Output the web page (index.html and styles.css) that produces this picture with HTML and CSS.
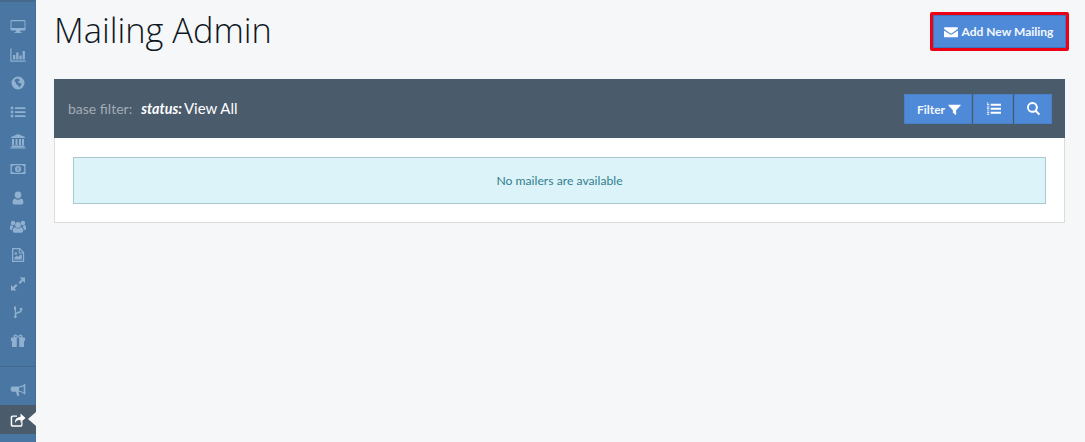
FILE: index.html
```html
<!DOCTYPE html>
<html lang="en">
<head>
<meta charset="utf-8">
<title>Mailing Admin</title>
<link rel="stylesheet" href="styles.css">
</head>
<body>
<div class="app">
  <nav class="sidebar">
    <ul class="nav-main">
      <li><svg viewBox="0 0 16 16"><path d="M1.500 2h13a1 1 0 0 1 1 1v8.500a1 1 0 0 1-1 1H10l.4 1.500h1.100v1h-7v-1h1.100L6 12.500H1.500a1 1 0 0 1-1-1V3a1 1 0 0 1 1-1zm0 1.200v6.800h13V3.200z" fill-rule="evenodd"/></svg></li>
      <li><svg viewBox="0 0 16 16"><path d="M.3 1.500h1.200v12h14.200v1.200H.3zM3 8h2.300v4.500H3zM6.200 5.500h2.300v7H6.200zM9.400 8.500h2.300v4H9.400zM12.600 4h2.300v8.500h-2.300z"/></svg></li>
      <li><svg viewBox="0 0 16 16"><path d="M8 1.500a6.500 6.500 0 1 0 0 13 6.500 6.500 0 0 0 0-13zM5 4.500l2-1 2 .5 1 1.500-1.500.5-.5 1.500 2 .5 1.500 1-1 2-1.500 1.500-.5-2-2-1-.5-2-1.500-1z" fill-rule="evenodd"/></svg></li>
      <li><svg viewBox="0 0 16 16"><path d="M.8 2.800h2.500v2.500H.8zM5 3.200h10.500v1.800H5zM.8 6.800h2.500v2.500H.8zM5 7.200h10.500V9H5zM.8 10.800h2.500v2.500H.8zM5 11.200h10.500V13H5z"/></svg></li>
      <li><svg viewBox="0 0 16 16"><path d="M8 1l7 3v1H1V4zM2 6h2v6H2zM5.500 6h2v6h-2zM9 6h2v6H9zM12 6h2v6h-2zM1.500 12.500h13V14h-13zM.5 14.300h15V15.500H.5z"/></svg></li>
      <li><svg viewBox="0 0 16 16"><path d="M.5 3h15v10H.5zM1.800 5.200v5.600a2 2 0 0 1 1.700 1h9a2 2 0 0 1 1.700-1V5.200a2 2 0 0 1-1.700-1h-9a2 2 0 0 1-1.700 1zM8 5a3 3 0 1 1 0 6 3 3 0 0 1 0-6zM7.400 6.500v3h1.200v-3z" fill-rule="evenodd"/></svg></li>
      <li><svg viewBox="0 0 16 16"><path d="M8 1.500a3.300 3.300 0 0 1 3.300 3.500A3.300 3.300 0 0 1 8 8.600 3.300 3.300 0 0 1 4.700 5 3.300 3.300 0 0 1 8 1.500zM5 8.400a4.300 4.300 0 0 0 6 0c1.600.3 2.400 1.700 2.400 3.800 0 1.400-.9 2.300-2.200 2.300H4.800c-1.300 0-2.200-.9-2.200-2.300 0-2.100.8-3.500 2.400-3.800z"/></svg></li>
      <li><svg viewBox="0 0 16 16"><path d="M3 1.800a2.200 2.200 0 1 1 0 4.400 2.200 2.200 0 0 1 0-4.400zM13 1.800a2.200 2.200 0 1 1 0 4.400 2.200 2.200 0 0 1 0-4.400zM8 3a2.900 2.900 0 1 1 0 5.800A2.900 2.900 0 0 1 8 3zM0 7.300c0-.6 1-1 2-1 .4.700 1 1.100 1.600 1.300-.9.800-1.500 1.900-1.500 3.300H1c-.6 0-1-.6-1-1.200zM16 7.300v2.400c0 .6-.4 1.200-1 1.200h-1.100c0-1.400-.6-2.500-1.500-3.300.6-.2 1.200-.6 1.600-1.300 1 0 2 .4 2 1zM4.800 8.200a4.400 4.400 0 0 0 6.400 0c1.400.3 2 1.700 2 3.400 0 1.400-.7 2.200-1.900 2.200H4.700c-1.200 0-1.900-.8-1.900-2.200 0-1.700.6-3.100 2-3.400z"/></svg></li>
      <li><svg viewBox="0 0 16 16"><path d="M2 1h8l4.200 4.200V15H2zM3.300 2.300v11.400h9.600V6.500H8.700V2.300zM9.800 2.600v2.800h2.800zM4.400 12.500v-1.800l2.200-2.200 1.400 1.400 2.700-2.700 1.100 1.100v4.200zM5.800 5.200a1.300 1.300 0 1 1 0 2.600 1.300 1.300 0 0 1 0-2.600z" fill-rule="evenodd"/></svg></li>
      <li><svg viewBox="0 0 16 16"><path d="M9.500 1.500H15V7l-2-2-3 3-1.500-1.500 3-3zM6.500 14.500H1V9l2 2 3-3 1.500 1.500-3 3z"/></svg></li>
      <li><svg viewBox="0 0 16 16"><path d="M4.800 1.500h1.200v6.500c.6-.9 1.500-1.200 2.700-1.400 1.100-.2 1.600-.6 1.700-1.300a1.400 1.400 0 0 1-.7-1.300 1.400 1.400 0 1 1 2.100 1.300c-.1 1.700-1.200 2.700-3 3-1.500.2-2.500.6-2.800 2a1.400 1.400 0 1 1-1.200 0zM4 1.500h2V5H4z"/></svg></li>
      <li><svg viewBox="0 0 16 16"><path d="M5.500 1.500c1 0 2 .9 2.500 2.200.5-1.300 1.500-2.200 2.500-2.200 1.200 0 2 .8 2 1.800 0 .5-.2 1-.5 1.200H15v3.500h-1V14H9.200V4.500H6.800V14H2V8H1V4.500h3c-.3-.2-.5-.7-.5-1.200 0-1 .8-1.800 2-1.800zM5.500 2.800a.6.6 0 0 0 0 1.200h1.400c-.3-.8-.9-1.200-1.400-1.200zM10.500 2.800c-.5 0-1.100.4-1.400 1.200h1.400a.6.6 0 0 0 0-1.200z" fill-rule="evenodd"/></svg></li>
    </ul>
    <ul class="nav-foot">
      <li><svg viewBox="0 0 16 16"><path d="M14.500 2h.8v10.500h-.8c-1.500-1.500-3.500-2.500-6-2.700l.8 3.700-2 .8-1.300-4.500H2.500A1.800 1.800 0 0 1 .7 8V6.200a1.800 1.800 0 0 1 1.800-1.800h5.500c2.700 0 5-1 6.500-2.400zM13.700 4.200A12 12 0 0 1 9 5.600v3.100c1.800.2 3.400.8 4.700 1.700z" fill-rule="evenodd"/></svg></li>
      <li class="active"><svg viewBox="0 0 16 16"><path d="M10.500 1.500L15.500 6l-5 4.500V8C8 8 6 8.400 5 11c-.3-3.700 2-6 5.500-6zM2.500 3.500H7v1.300H3a.8.8 0 0 0-.8.8v6.800c0 .4.4.8.8.8h7.500c.4 0 .8-.4.8-.8V10l1.200-1v4c0 1-.8 1.800-1.800 1.800H2.500A1.800 1.800 0 0 1 .7 13V5.300c0-1 .8-1.800 1.800-1.800z"/></svg></li>
    </ul>
  </nav>
  <main class="content">
    <header class="page-head">
      <h1 class="page-title">Mailing Admin</h1>
      <a class="add-btn" href="#"><svg class="ico" viewBox="0 0 16 16"><path d="M1 2.500h14c.5 0 1 .4 1 1 0 .6-.4 1.200-1 1.600L9 9.300a1.800 1.800 0 0 1-2 0L1 5.100C.4 4.700 0 4.100 0 3.500c0-.6.500-1 1-1zM0 6.300l6.500 4.300a2.700 2.700 0 0 0 3 0L16 6.300v6.700c0 .6-.4 1-1 1H1c-.6 0-1-.4-1-1z"/></svg>Add New Mailing</a>
    </header>
    <section class="panel">
      <div class="panel-bar">
        <div class="filter-text"><span class="filter-label">base filter:</span><em class="filter-key">status:</em><span class="filter-value">View All</span></div>
        <div class="btn-group">
          <button class="btn btn-filter">Filter<svg class="ico" viewBox="0 0 16 16"><path d="M.5 2h15v1L10 8.800V15l-4-3V8.800L.5 3z"/></svg></button>
          <button class="btn btn-list"><svg class="ico-list" viewBox="0 0 16 16"><path d="M1 1.500h1.500v1.200H1zM1 3.500h2.500v1H1zM1 5.800h2.500v1H1zM1 7.800h2.500v1H1zM1 10h2.500v1H1zM1 12h2.500v1H1zM1 14h2.500v1H1zM5 3h11v2H5zM5 7.200h11v2H5zM5 11.500h11v2H5z"/></svg></button>
          <button class="btn btn-search"><svg class="ico-search" viewBox="0 0 16 16"><path d="M6.800 1a5.800 5.800 0 0 1 4.700 9.200l3.600 3.600-1.500 1.500-3.600-3.600A5.800 5.800 0 1 1 6.800 1zm0 2.100a3.700 3.700 0 1 0 0 7.400 3.700 3.700 0 0 0 0-7.400z" fill-rule="evenodd"/></svg></button>
        </div>
      </div>
      <div class="panel-body">
        <div class="notice">No mailers are available</div>
      </div>
    </section>
  </main>
</div>
</body>
</html>
```
FILE: styles.css
```css
* { box-sizing: border-box; }
html, body { margin: 0; height: 100%; }
body {
  background: #f6f7f9;
  font-family: "Lato", "Open Sans", sans-serif;
  overflow: hidden;
}
.app { display: flex; height: 442px; }
.sidebar {
  width: 36px;
  flex: none;
  background: #4a76a3;
  border-top: 2px solid #47698c;
  border-right: 1px solid #44709c;
  padding-top: 9.500px;
}
.sidebar ul { list-style: none; margin: 0; padding: 0; }
.sidebar li {
  height: 28.7px;
  display: flex;
  align-items: center;
  justify-content: center;
}
.sidebar svg { width: 16px; height: 16px; fill: #8fb0cf; }
.nav-main { border-bottom: 1px solid #44698f; height: 355.500px; }
.nav-foot { padding-top: 8px !important; }
.nav-foot li { height: 29px; }
.nav-foot li:first-child { height: 30px; }
.nav-foot .active {
  background: #4a5b6c;
  position: relative;
  width: 36px;
}
.nav-foot .active svg { fill: #fff; }
.nav-foot .active::after {
  content: "";
  position: absolute;
  right: 0;
  top: 7px;
  border: 7px solid transparent;
  border-left: 0;
  border-right: 8px solid #f6f7f9;
}
.content { flex: none; width: 1011px; margin-left: 18px; }
.page-head {
  display: flex;
  justify-content: space-between;
  align-items: flex-start;
  height: 79px;
}
.page-title {
  margin: 8px 0 0;
  font-family: "Open Sans", sans-serif;
  font-size: 34.400px;
  line-height: 44px;
  font-weight: 300;
  color: #10181f;
}
.add-btn {
  display: flex;
  align-items: center;
  justify-content: center;
  width: 139px;
  height: 39px;
  margin: 12px -4px 0 0;
  padding: 0 2px 0 0;
  background: #4f8ad9;
  border: 3px solid #ed0016;
  border-radius: 2px;
  box-shadow: inset 0 0 0 1px #3f75bd;
  color: #f4f8fd;
  font-size: 12px;
  font-weight: 700;
  text-decoration: none;
}
.ico { width: 13px; height: 13px; fill: #fff; flex: none; }
.add-btn .ico { width: 14px; height: 14px; margin-right: 4px; }
.panel-bar {
  height: 59px;
  background: #4a5b6c;
  display: flex;
  align-items: center;
  justify-content: space-between;
  padding: 0 13px 0 14px;
}
.filter-text { display: flex; align-items: baseline; margin-top: -2px; }
.filter-label { font-size: 14px; color: #a3abb4; margin-right: 9px; }
.filter-key { font-size: 14.300px; font-weight: 700; color: #fff; margin-right: 2px; }
.filter-value { font-size: 15px; color: #fff; }
.btn-group { display: flex; gap: 1px; }
.btn {
  height: 30px;
  border: 1px solid #4a80c6;
  background: #4f8ad9;
  color: #f4f8fd;
  font: 700 12px "Lato", sans-serif;
  display: flex;
  align-items: center;
  justify-content: center;
  padding: 1px 0 0;
}
.btn-filter { width: 68px; gap: 3px; padding-left: 2px; }
.btn-list { width: 40px; padding-top: 0; }
.btn-search { width: 38px; padding-top: 0; }
.ico-list { width: 15px; height: 15px; fill: #fff; }
.ico-search { width: 15px; height: 15px; fill: #fff; }
.panel-body {
  height: 85px;
  padding: 19px 18px;
  background: #fff;
  border: 1px solid #dcdcdc;
  border-top: 0;
}
.notice {
  height: 47px;
  display: flex;
  align-items: center;
  justify-content: center;
  padding-bottom: 1px;
  background: #dcf3f9;
  border: 1px solid #a9c9cf;
  color: #317f8e;
  font-size: 12.200px;
}
```
